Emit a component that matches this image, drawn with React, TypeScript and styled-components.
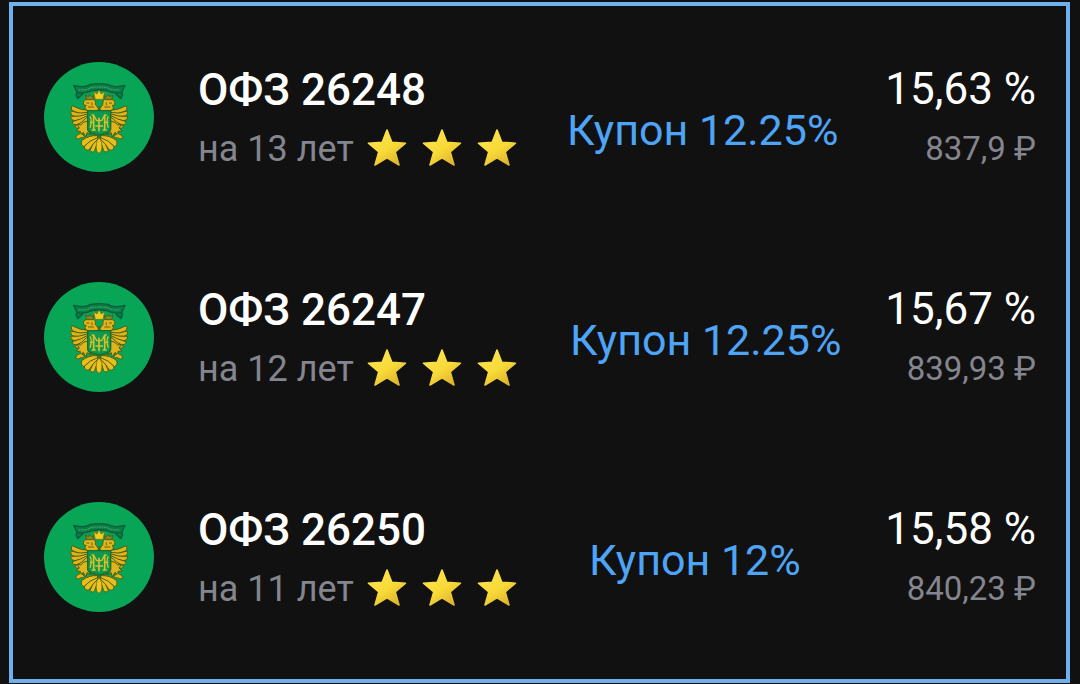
import React from "react";
import styled, { createGlobalStyle } from "styled-components";

const GlobalStyle = createGlobalStyle`
  *, *::before, *::after { box-sizing: border-box; }
  body {
    margin: 0;
    background: #111111;
    font-family: Roboto, "Noto Sans", sans-serif;
  }
`;

const Page = styled.main`
  padding: 2px 10px 1px 9px;
`;

const BondList = styled.ul`
  margin: 0;
  padding: 1px 30px 12px 31px;
  list-style: none;
  border: 4px solid #6fb0ee;
`;

const BondRow = styled.li`
  display: grid;
  grid-template-columns: 110px 324px minmax(0, 1fr) auto;
  column-gap: 44px;
  align-items: center;
  height: 220px;
`;

const Avatar = styled.svg`
  display: block;
  width: 110px;
  height: 110px;
`;

const Info = styled.div`
  display: flex;
  flex-direction: column;
  min-width: 0;
  padding-top: 4px;
`;

const Name = styled.h2`
  margin: 0;
  font-size: 44px;
  line-height: 60px;
  font-weight: 500;
  color: #ffffff;
  white-space: nowrap;
`;

const Term = styled.p`
  display: flex;
  align-items: center;
  gap: 13px;
  margin: 0;
  font-size: 36px;
  line-height: 58px;
  color: #84858e;
  white-space: nowrap;
`;

const Stars = styled.span`
  display: flex;
  gap: 15px;
`;

const StarIcon = styled.svg`
  display: block;
  width: 40px;
  height: 40px;
`;

const Coupon = styled.p<{ $indent: number; $drop: number }>`
  margin: 0;
  padding-left: ${(p) => p.$indent}px;
  padding-top: ${(p) => p.$drop}px;
  font-size: 43px;
  line-height: 52px;
  color: #4ea4f6;
  white-space: nowrap;
`;

const Figures = styled.div`
  display: flex;
  flex-direction: column;
  padding-top: 4px;
  text-align: right;
  white-space: nowrap;
`;

const Yield = styled.span`
  font-size: 44px;
  line-height: 60px;
  color: #ffffff;
`;

const Price = styled.span`
  font-size: 33px;
  line-height: 60px;
  color: #84858e;
`;

const feathers = [
  "M146 160 Q122 160 96 146 Q90 158 103 164 Q122 172 146 172Z",
  "M146 166 Q118 172 93 162 Q90 174 103 178 Q124 182 146 176Z",
  "M146 170 Q118 180 92 178 Q92 190 105 191 Q128 190 146 180Z",
  "M146 174 Q122 188 96 194 Q99 205 111 203 Q132 196 146 184Z",
  "M144 178 Q126 198 104 208 Q110 218 121 211 Q138 200 146 188Z",
];

function HalfEagle() {
  return (
    <g stroke="#4f6014" strokeWidth="3" strokeLinejoin="round">
      <g fill="#e0b41a">
        {feathers.map((d) => (
          <path key={d} d={d} />
        ))}
        <path d="M144 162 Q128 152 139 146 L131 143 Q128 132 138 128 Q145 120 156 125 Q169 129 166 142 L175 154 L173 162Z" />
        <path d="M143 192 Q128 194 122 204 L111 202 L118 213 L109 222 L121 223 L121 234 L130 226 L138 240 L141 227 L151 232 L144 216Z" />
        <path d="M122 229 Q110 231 106 243 Q115 250 123 242 Q130 246 134 237Z" />
      </g>
      <path d="M140 128 L136 114 L145 119 L149 112 L155 119 L163 116 L158 128Z" fill="#808a24" />
      <path d="M139 138 h9 M144 150 h18 M156 136 v9" stroke="#6c6414" fill="none" />
      <g fill="#e9bd1b">
        <path d="M172 236 Q146 234 125 251 Q121 265 132 269 Q148 252 174 248Z" />
        <path d="M173 242 Q148 250 133 268 Q134 282 147 279 Q155 262 174 252Z" />
        <path d="M174 246 Q156 260 150 280 Q157 290 164 281 Q167 266 177 254Z" />
      </g>
    </g>
  );
}

function Emblem() {
  return (
    <Avatar viewBox="12 15 330 330" role="img" aria-label="Герб Минфина">
      <circle cx="177" cy="180" r="165" fill="#08a556" />
      <g fill="#087f48" stroke="#0a5c38" strokeWidth="4" strokeLinejoin="round">
        <path d="M104 86 L120 92 L128 112 L113 125 L108 112 L114 103Z" />
        <path d="M252 86 L236 92 L228 112 L243 125 L248 112 L242 103Z" />
        <path d="M101 85 Q138 94 152 82 Q176 78 203 82 Q218 94 255 85 L245 107 Q218 111 200 101 Q177 97 155 101 Q138 111 111 107Z" />
      </g>
      <path d="M116 98 Q139 101 153 92 Q177 88 202 92 Q217 101 240 98" fill="none" stroke="#3f9f5c" strokeWidth="4" strokeDasharray="5 2" />
      <path d="M138 148 H218 V216 Q218 230 205 234 L178 242 L151 234 Q138 230 138 216Z" fill="#2f7d28" />
      <HalfEagle />
      <g transform="translate(355 0) scale(-1 1)">
        <HalfEagle />
      </g>
      <path d="M166 127 L161 104 L171 111 L177 99 L184 111 L194 104 L189 127Z" fill="#f4cc20" stroke="#756a15" strokeWidth="2" />
      <path d="M177 242 Q165 256 170 282 L177 289 L184 282 Q190 256 177 242Z" fill="#f0c51d" stroke="#5b6014" strokeWidth="2" />
      <path d="M143 161 H212 V215 Q212 224 202 227 L178 234 L153 227 Q143 224 143 215Z" fill="#0b9a4e" stroke="#176e30" strokeWidth="4" />
      <g fill="none" stroke="#dcc02a" strokeWidth="4">
        <path d="M161 174 V219 M194 174 V219 M177 182 V223" strokeWidth="5" />
        <path d="M161 175 L170 191 H185 L194 175 M155 174 H162 M193 174 H200 M155 219 H167 M188 219 H200" />
        <path d="M150 178 Q158 190 150 212 M205 178 Q197 190 205 212 M150 196 H161 M194 196 H205 M166 207 H189" />
      </g>
    </Avatar>
  );
}

function Star({ id }: { id: string }) {
  return (
    <StarIcon viewBox="0 1 40 40" aria-hidden="true">
      <defs>
        <linearGradient id={id} x1="0.2" y1="0.1" x2="0.8" y2="1">
          <stop offset="0" stopColor="#fbe34f" />
          <stop offset="0.5" stopColor="#f8da38" />
          <stop offset="1" stopColor="#dcb02c" />
        </linearGradient>
      </defs>
      <path
        d="M20 2 L24.8 14.2 L38.5 15.2 L28.2 23.8 L32 37 L20 29.7 L8 37 L11.8 23.8 L1.5 15.2 L15.2 14.2Z"
        fill={`url(#${id})`}
        stroke={`url(#${id})`}
        strokeWidth="1.6"
        strokeLinejoin="round"
      />
    </StarIcon>
  );
}

const bonds = [
  { name: "ОФЗ 26248", term: "на 13 лет", coupon: "Купон 12.25%", indent: 1, drop: 26, rate: "15,63 %", price: "837,9 ₽" },
  { name: "ОФЗ 26247", term: "на 12 лет", coupon: "Купон 12.25%", indent: 4, drop: 6, rate: "15,67 %", price: "839,93 ₽" },
  { name: "ОФЗ 26250", term: "на 11 лет", coupon: "Купон 12%", indent: 23, drop: 6, rate: "15,58 %", price: "840,23 ₽" },
];

export default function App() {
  return (
    <>
      <GlobalStyle />
      <Page>
        <BondList>
          {bonds.map((bond) => (
            <BondRow key={bond.name}>
              <Emblem />
              <Info>
                <Name>{bond.name}</Name>
                <Term>
                  {bond.term}
                  <Stars role="img" aria-label="3 звезды">
                    {[1, 2, 3].map((n) => (
                      <Star key={n} id={`star-${bond.name.slice(4)}-${n}`} />
                    ))}
                  </Stars>
                </Term>
              </Info>
              <Coupon $indent={bond.indent} $drop={bond.drop}>
                {bond.coupon}
              </Coupon>
              <Figures>
                <Yield>{bond.rate}</Yield>
                <Price>{bond.price}</Price>
              </Figures>
            </BondRow>
          ))}
        </BondList>
      </Page>
    </>
  );
}
